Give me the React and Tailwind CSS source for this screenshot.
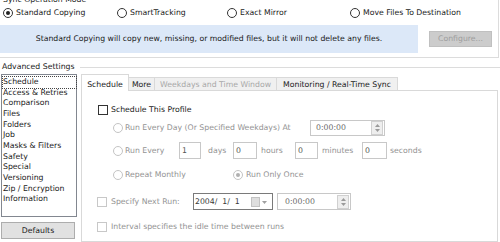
import React from "react";

function Radio({ checked, disabled }) {
  return (
    <span
      className={`flex h-[10px] w-[10px] shrink-0 items-center justify-center rounded-full border bg-white ${
        disabled ? "border-[#c4c4c4]" : "border-[#333333]"
      }`}
    >
      {checked && (
        <span className={`h-[4px] w-[4px] rounded-full ${disabled ? "bg-[#b0b0b0]" : "bg-[#222222]"}`} />
      )}
    </span>
  );
}

function Check({ disabled }) {
  return (
    <span
      className={`block h-[10px] w-[10px] shrink-0 border bg-white ${
        disabled ? "border-[#c8c8c8]" : "border-[#333333]"
      }`}
    />
  );
}

function Spin() {
  return (
    <span className="ml-auto mr-px flex h-[14px] w-[12px] flex-col items-center justify-center gap-[2px] border border-[#d0d0d0] bg-[#eeeeee]">
      <svg width="5" height="3" viewBox="0 0 5 3">
        <path d="M0 3 L2.5 0 L5 3Z" fill="#9a9a9a" />
      </svg>
      <svg width="5" height="3" viewBox="0 0 5 3">
        <path d="M0 0 L2.5 3 L5 0Z" fill="#9a9a9a" />
      </svg>
    </span>
  );
}

const listItems = [
  "Access & Retries",
  "Comparison",
  "Files",
  "Folders",
  "Job",
  "Masks & Filters",
  "Safety",
  "Special",
  "Versioning",
  "Zip / Encryption",
  "Information",
];

export default function App() {
  const dis = "text-[#939393]";
  return (
    <div className="h-[242px] w-[500px] overflow-hidden bg-white font-['DejaVu_Sans',sans-serif] text-[7.75px] leading-none text-[#1b1b1b]">
      {/* Sync Operation Mode group */}
      <div className="h-[58px] w-[499px] border-b border-r border-[#dcdcdc]">
        <div className="h-[4px] -translate-y-[2px] pl-[3px] leading-[4px]">Sync Operation Mode</div>
        <div className="mt-[3px] flex h-[12px] items-center pl-[3px]">
          <div className="flex w-[114px] items-center gap-[3px]">
            <Radio checked />
            <span>Standard Copying</span>
          </div>
          <div className="flex w-[110px] items-center gap-[3px]">
            <Radio />
            <span>SmartTracking</span>
          </div>
          <div className="flex w-[123px] items-center gap-[3px]">
            <Radio />
            <span>Exact Mirror</span>
          </div>
          <div className="flex items-center gap-[3px]">
            <Radio />
            <span>Move Files To Destination</span>
          </div>
        </div>
        <div className="mt-[6px] flex h-[28px] items-center">
          <div className="flex h-full w-[418px] items-center justify-center bg-[#dce8f8]">
            Standard Copying will copy new, missing, or modified files, but it will not delete any files.
          </div>
          <div className="ml-[11px] flex h-[16px] w-[63px] items-center justify-center border border-[#c0c0c0] bg-[#cccccc] text-[#9d9d9d]">
            Configure...
          </div>
        </div>
      </div>

      {/* Advanced Settings */}
      <div className="mt-[3px] flex h-[12px] items-center">
        <span className="pl-[2px]">Advanced Settings</span>
        <div className="ml-[5px] h-px flex-1 bg-[#dcdcdc]" />
      </div>

      <div className="flex">
        {/* Left list */}
        <div className="w-[77px] pl-[1px]">
          <div className="mt-[1px] h-[143px] w-[76px] border border-[#828790] bg-white pl-[1px] pt-[2px]">
            <div className="h-[10.67px] leading-[10.67px] outline-1 outline-dotted outline-[#444444]">Schedule</div>
            {listItems.map((t) => (
              <div key={t} className="h-[10.67px] leading-[10.67px]">
                {t}
              </div>
            ))}
          </div>
          <div className="mt-[5px] flex h-[17px] w-[74px] items-center justify-center border border-[#adadad] bg-[#e1e1e1]">
            Defaults
          </div>
        </div>

        {/* Right tabs */}
        <div className="ml-[4px] w-[417px]">
          <div className="flex h-[17px] items-end">
            <div className="relative z-10 -mb-px flex h-[17px] w-[48px] justify-center border border-b-0 border-[#d9d9d9] bg-white pt-[6px]">
              Schedule
            </div>
            <div className="flex h-[13px] w-[26px] justify-center border-r border-t border-[#d9d9d9] bg-[#f0f0f0] pt-[3px]">
              More
            </div>
            <div className="flex h-[13px] w-[122px] justify-center border-r border-t border-[#d9d9d9] bg-[#f0f0f0] pt-[3px] text-[#a8a8a8]">
              Weekdays and Time Window
            </div>
            <div className="flex h-[13px] w-[121px] justify-center border-r border-t border-[#d9d9d9] bg-[#f0f0f0] pt-[3px]">
              Monitoring / Real-Time Sync
            </div>
          </div>
          <div className="h-[152px] w-[417px] border border-[#d9d9d9] bg-white">
            {/* Row 1 */}
            <div className="mt-[12px] flex h-[14px] items-center gap-[3px] pl-[16px]">
              <Check />
              <span>Schedule This Profile</span>
            </div>
            {/* Row 2 */}
            <div className="mt-[3px] flex h-[16px] items-center pl-[31px]">
              <div className={`flex w-[197px] items-center gap-[2px] ${dis}`}>
                <Radio disabled />
                <span>Run Every Day (Or Specified Weekdays) At</span>
              </div>
              <div className="flex h-[16px] w-[75px] items-center border border-[#c8c8c8] pl-[5px] text-[#6a6a6a]">
                <span>0:00:00</span>
                <Spin />
              </div>
            </div>
            {/* Row 3 */}
            <div className={`mt-[6px] flex h-[17px] items-center pl-[31px] ${dis}`}>
              <div className="flex w-[66px] items-center gap-[2px]">
                <Radio disabled />
                <span>Run Every</span>
              </div>
              <div className="flex h-[17px] w-[22px] items-center border border-[#c8c8c8] pl-[2px] text-[#555555]">1</div>
              <div className="w-[32px] pl-[7px]">days</div>
              <div className="flex h-[17px] w-[24px] items-center border border-[#c8c8c8] pl-[2px] text-[#555555]">0</div>
              <div className="w-[38px] pl-[4px]">hours</div>
              <div className="flex h-[17px] w-[23px] items-center border border-[#c8c8c8] pl-[2px] text-[#555555]">0</div>
              <div className="w-[44px] pl-[4px]">minutes</div>
              <div className="flex h-[17px] w-[25px] items-center border border-[#c8c8c8] pl-[2px] text-[#555555]">0</div>
              <div className="pl-[3px]">seconds</div>
            </div>
            {/* Row 4 */}
            <div className={`mt-[9px] flex h-[14px] items-center pl-[31px] ${dis}`}>
              <div className="flex w-[120px] items-center gap-[2px]">
                <Radio disabled />
                <span>Repeat Monthly</span>
              </div>
              <div className="flex items-center gap-[3px]">
                <Radio disabled checked />
                <span>Run Only Once</span>
              </div>
            </div>
            {/* Row 5 */}
            <div className="mt-[11px] flex h-[17px] items-center pl-[15px]">
              <div className={`flex w-[96px] items-center gap-[4px] ${dis}`}>
                <Check disabled />
                <span>Specify Next Run:</span>
              </div>
              <div className="flex h-[17px] w-[80px] items-center border border-[#7a7a7a] pl-px text-[#3a3a3a]">
                <span className="w-[56px] whitespace-pre">2004/  1/  1</span>
                <svg width="17" height="10" viewBox="0 0 17 10">
                  <rect x="0.5" y="0.5" width="8" height="9" fill="#dedede" stroke="#c2c2c2" />
                  <path d="M11 4 L16 4 L13.5 7Z" fill="#a0a0a0" />
                </svg>
              </div>
              <div className="ml-[4px] flex h-[17px] w-[74px] items-center border border-[#c8c8c8] pl-[7px] text-[#6a6a6a]">
                <span>0:00:00</span>
                <Spin />
              </div>
            </div>
            {/* Row 6 */}
            <div className={`mt-[10px] flex h-[14px] items-center gap-[4px] pl-[15px] ${dis}`}>
              <Check disabled />
              <span>Interval specifies the idle time between runs</span>
            </div>
          </div>
        </div>
      </div>
    </div>
  );
}
